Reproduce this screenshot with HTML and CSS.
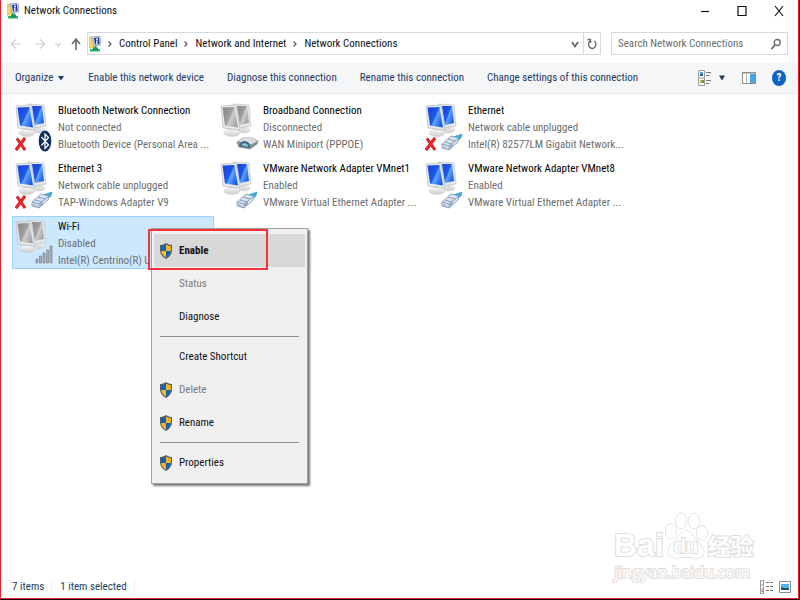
FILE: index.html
```html
<!DOCTYPE html>
<html lang="en">
<head>
<meta charset="utf-8">
<title>Network Connections</title>
<link rel="stylesheet" href="styles.css">
</head>
<body>
<svg class="defs" aria-hidden="true">
  <defs>
    <linearGradient id="blue" x1="0" y1=".2" x2="1" y2=".8">
      <stop offset="0" stop-color="#1a45d8"/><stop offset=".45" stop-color="#1c58ea"/><stop offset=".55" stop-color="#5fa2ff"/><stop offset="1" stop-color="#0f55e6"/>
    </linearGradient>
    <linearGradient id="gray" x1="0" y1=".2" x2="1" y2=".8">
      <stop offset="0" stop-color="#8a8a8a"/><stop offset=".45" stop-color="#a0a0a0"/><stop offset=".55" stop-color="#cdcdcd"/><stop offset="1" stop-color="#a0a0a0"/>
    </linearGradient>
    <linearGradient id="base" x1="0" y1="0" x2="0" y2="1">
      <stop offset="0" stop-color="#f8f8f8"/><stop offset="1" stop-color="#c9cbcd"/>
    </linearGradient>
    <symbol id="frames" viewBox="0 0 40 52">
      <ellipse cx="25" cy="29" rx="6" ry="3" fill="url(#base)" stroke="#d8dadc" stroke-width=".6"/>
      <path d="M22 24h5v5h-5z" fill="#dcdee0"/>
      <path d="M14 3 L30 4 L32 25 L19 27Z" fill="#e4e8ec" stroke="#c2c6ca" stroke-width=".7"/>
      <path d="M10 26 h6 v6 h-6z" fill="#d4d6d8"/>
      <ellipse cx="13" cy="32" rx="8" ry="3.500" fill="url(#base)" stroke="#d0d2d4" stroke-width=".6"/>
      <path d="M2 5 L17 4 L21 29 L4 27Z" fill="#e6eaee" stroke="#b8bcc0" stroke-width=".7"/>
    </symbol>
    <symbol id="pc-blue" viewBox="0 0 40 52">
      <use href="#frames"/>
      <path d="M18 5 L28 5 L30 22 L21 24Z" fill="url(#blue)"/>
      <path d="M3.500 6.500 L15.500 6 L19 26.500 L6 24.500Z" fill="url(#blue)"/>
    </symbol>
    <symbol id="pc-gray" viewBox="0 0 40 52">
      <use href="#frames"/>
      <path d="M18 5 L28 5 L30 22 L21 24Z" fill="url(#gray)"/>
      <path d="M3.500 6.500 L15.500 6 L19 26.500 L6 24.500Z" fill="url(#gray)"/>
    </symbol>
    <symbol id="cross" viewBox="0 0 40 52">
      <path d="M3 37.500 L11 49 M11 37 L2 49" stroke="#b81417" stroke-width="3" fill="none"/>
      <path d="M3 37.500 L11 49 M11 37 L2 49" stroke="#f0262c" stroke-width="2.100" fill="none"/>
    </symbol>
    <symbol id="plug" viewBox="0 0 40 52">
      <path d="M29 36 L38 33 L37 37 L33 40Z" fill="#35b2e6" stroke="#1d86b8" stroke-width=".5"/>
      <path d="M18 43 L27 35 L35 37 L34 41 L25 49 L18 47Z" fill="#d9e5f1" stroke="#8096ae" stroke-width=".8"/>
      <path d="M18 43 L25 45 L35 37 M25 45 V49 M21 41 L28 43 M24 38 L31 40 M20 45 V47 M22 46 V48" fill="none" stroke="#7188a2" stroke-width=".8"/>
      <path d="M26 45 L29 43 V45 L26 48Z" fill="#8aa4c2"/>
    </symbol>
    <symbol id="bluetooth" viewBox="0 0 40 52">
      <ellipse cx="31" cy="40" rx="6.300" ry="10.500" fill="#0b2d5e"/>
      <path d="M27.500 36 L34.500 44 L31 47.500 V33 L34.500 36.500 L27.500 44.500" fill="none" stroke="#fff" stroke-width="1.300"/>
    </symbol>
    <symbol id="modem" viewBox="0 0 40 52">
      <path d="M18 41 L24 37 L33 37 L39 40 L38 43 L31 48 L20 46Z" fill="#8c9096" stroke="#777b80" stroke-width=".7"/>
      <path d="M19 40.500 L24 37 L33 37 L38.500 40 L32 43.500Z" fill="#dcdee1"/>
      <path d="M20 44 Q23 38 29 41 Q32 43 31 47 L21 45.500Z" fill="#3f6f88"/>
      <path d="M23 43 Q26 41 29 44 V45.500 L23 44.500Z" fill="#8fc2da"/>
    </symbol>
    <symbol id="bars" viewBox="0 0 40 52">
      <g fill="#aab3bb" stroke="#7f8992" stroke-width=".8"><path d="M22 42h2v4h-2zM25.500 39h2v7h-2zM29 36h2v10h-2zM32.500 33h2v13h-2zM36 29h2v17h-2z"/></g>
    </symbol>
    <symbol id="shield" viewBox="0 0 12 16">
      <path d="M6 .5 Q8.500 2.500 11.500 2.500 V8 Q11 12.500 6 15.500 Q1 12.500 .5 8 V2.500 Q3.500 2.500 6 .5Z" fill="#fdb913"/>
      <path d="M6 1 Q3.500 3 1 3 V8 H6Z M6 8 H11 Q10.500 12 6 15Z" fill="#0c62c4"/>
      <path d="M6 .7 Q8.500 2.500 11.400 2.500 V8 Q11 12.500 6 15.300 Q1 12.500 .6 8 V2.500 Q3.500 2.500 6 .7Z" fill="none" stroke="#4d5a66" stroke-width="1.100"/>
    </symbol>
    <symbol id="net" viewBox="0 0 12 16">
      <path d="M0 1h5v11H0z" fill="#f2d768" stroke="#c9ac42" stroke-width=".5"/>
      <path d="M3 1 L11 0 L12 9 L5 10Z" fill="#d8dde6" stroke="#7f8794" stroke-width=".6"/>
      <path d="M5 2 L10 1.500 L10.500 8 L6 8.500Z" fill="#1632bd"/>
      <path d="M7 2.500h2v2H7zM7 5h1.500v3H7z" fill="#dfe8ff"/>
      <path d="M5.500 10h2v3h-2z" fill="#28a862"/><path d="M1 13h10v2.500H1z" fill="#25b76a"/><path d="M4 11.500h5v3H4z" fill="#1a9654"/>
    </symbol>
  </defs>
</svg>

<div class="window">
  <header class="titlebar">
    <svg class="net-icon" aria-hidden="true"><use href="#net"/></svg>
    <h1>Network Connections</h1>
    <div class="caption">
      <button aria-label="Minimize"><svg viewBox="0 0 12 12"><path d="M2 6.500h8" stroke="#111" stroke-width="1.200"/></svg></button>
      <button aria-label="Maximize"><svg viewBox="0 0 12 12"><path d="M2 1.500h8v9H2z" fill="none" stroke="#111" stroke-width="1.200"/></svg></button>
      <button aria-label="Close"><svg viewBox="0 0 12 12"><path d="M2 1l8 10M10 1L2 11" stroke="#111" stroke-width="1.200"/></svg></button>
    </div>
  </header>

  <div class="navrow">
    <nav class="arrows" aria-label="History">
      <button aria-label="Back"><svg viewBox="0 0 12 12"><path d="M11 6H2M6 1.500L1.500 6L6 10.500" fill="none" stroke="#cfcfcf" stroke-width="1.200"/></svg></button>
      <button aria-label="Forward"><svg viewBox="0 0 12 12"><path d="M1 6h9M6 1.500L10.500 6L6 10.500" fill="none" stroke="#cfcfcf" stroke-width="1.200"/></svg></button>
      <button class="recent" aria-label="Recent locations"><svg viewBox="0 0 12 12"><path d="M3.500 5L6 8L8.500 5" fill="none" stroke="#cfcfcf" stroke-width="1.200"/></svg></button>
      <button aria-label="Up"><svg viewBox="0 0 12 12"><path d="M6 12V1.500M2 6L6 1L10 6" fill="none" stroke="#6b6b6b" stroke-width="1.600"/></svg></button>
    </nav>
    <div class="address">
      <svg class="net-icon" aria-hidden="true"><use href="#net"/></svg>
      <svg class="chev" viewBox="0 0 4 8"><path d="M.5 1.500L3 4L.5 6.500" fill="none" stroke="#555" stroke-width="1.200"/></svg>
      <a href="#">Control Panel</a>
      <svg class="chev" viewBox="0 0 4 8"><path d="M.5 1.500L3 4L.5 6.500" fill="none" stroke="#555" stroke-width="1.200"/></svg>
      <a href="#">Network and Internet</a>
      <svg class="chev" viewBox="0 0 4 8"><path d="M.5 1.500L3 4L.5 6.500" fill="none" stroke="#555" stroke-width="1.200"/></svg>
      <a href="#">Network Connections</a>
      <button class="drop" aria-label="Previous locations"><svg viewBox="0 0 12 12"><path d="M3 4L6 8.500L9 4" fill="none" stroke="#666" stroke-width="1.700"/></svg></button>
      <button class="refresh" aria-label="Refresh"><svg viewBox="0 0 12 12"><path d="M8.500 3A3.600 4.200 0 1 1 4 3M1.500 1.500H4.500V5" fill="none" stroke="#666" stroke-width="1.400"/></svg></button>
    </div>
    <div class="search">
      <input type="text" aria-label="Search Network Connections" placeholder="Search Network Connections">
      <svg viewBox="0 0 12 12"><circle cx="7.200" cy="4.500" r="3" fill="none" stroke="#666" stroke-width="1.300"/><path d="M5 7L1.500 11" stroke="#666" stroke-width="1.800"/></svg>
    </div>
  </div>

  <div class="toolbar">
    <button class="organize">Organize <svg viewBox="0 0 8 6"><path d="M1 1h6L4 5.500Z" fill="#1e395b"/></svg></button>
    <button>Enable this network device</button>
    <button>Diagnose this connection</button>
    <button>Rename this connection</button>
    <button>Change settings of this connection</button>
    <div class="tools">
      <button aria-label="Change your view"><svg class="view" viewBox="0 0 28 16">
        <path d="M.5.5h6v15h-6zM.5 8h6" fill="#fafafa" stroke="#9a9a9a"/><path d="M2 2h3v2H2z" fill="#4fa4e4"/><path d="M2 4h3v2H2z" fill="#275f8f"/><path d="M2 10h2v3H2z" fill="#e39a3f"/><path d="M4 10h2v3H4z" fill="#46a548"/>
        <path d="M8 2.500h5M8 5.500h3M8 10.500h5M8 13.500h3" stroke="#777"/><path d="M21 5.500h6L24 10.500Z" fill="#1e395b"/></svg></button>
      <button aria-label="Show the preview pane"><svg class="pane" viewBox="0 0 14 14"><path d="M.5 1.500h13v11H.5z" fill="#fff" stroke="#8b8b8b"/><path d="M.5 1.500h13v1H.5z" fill="#8b8b8b"/><path d="M4.500 2v10" stroke="#b5b5b5"/><path d="M8 3h5v9H8z" fill="#45a3ea"/></svg></button>
      <button class="help" aria-label="Help">?</button>
    </div>
  </div>

  <main>
    <ul class="connections">
      <li><svg><use href="#pc-blue"/><use href="#cross"/><use href="#bluetooth"/></svg>
        <div><strong>Bluetooth Network Connection</strong><span>Not connected</span><span>Bluetooth Device (Personal Area ...</span></div></li>
      <li><svg><use href="#pc-gray"/><use href="#modem"/></svg>
        <div><strong>Broadband Connection</strong><span>Disconnected</span><span>WAN Miniport (PPPOE)</span></div></li>
      <li><svg><use href="#pc-blue"/><use href="#cross"/><use href="#plug"/></svg>
        <div><strong>Ethernet</strong><span>Network cable unplugged</span><span>Intel(R) 82577LM Gigabit Network...</span></div></li>
      <li><svg><use href="#pc-blue"/><use href="#cross"/><use href="#plug"/></svg>
        <div><strong>Ethernet 3</strong><span>Network cable unplugged</span><span>TAP-Windows Adapter V9</span></div></li>
      <li><svg><use href="#pc-blue"/><use href="#plug"/></svg>
        <div><strong>VMware Network Adapter VMnet1</strong><span>Enabled</span><span>VMware Virtual Ethernet Adapter ...</span></div></li>
      <li><svg><use href="#pc-blue"/><use href="#plug"/></svg>
        <div><strong>VMware Network Adapter VMnet8</strong><span>Enabled</span><span>VMware Virtual Ethernet Adapter ...</span></div></li>
      <li class="selected"><svg><use href="#pc-gray"/><use href="#bars"/></svg>
        <div><strong>Wi-Fi</strong><span>Disabled</span><span>Intel(R) Centrino(R) U</span></div></li>
    </ul>
  </main>

  <footer>
    <span>7 items</span><span>1 item selected</span>
    <div class="views">
      <button aria-label="Details view"><svg viewBox="0 0 14 14"><path d="M.5.500h3v13h-3zM.5 5h3M.5 9h3" fill="#fff" stroke="#999"/><path d="M1.500 10.500h1.500v1.500H1.500z" fill="#d66"/><path d="M6 2.500h3M10 2.500h3M6 6.500h3M10 6.500h3M6 10.500h3M10 10.500h3" stroke="#777"/></svg></button>
      <button aria-label="Large icons view"><svg viewBox="0 0 14 14"><path d="M1.500 1.500h11v11h-11z" fill="#fff" stroke="#8c8c8c"/><path d="M3 4h8v6H3z" fill="#58b0ea"/><path d="M3 7l3 1h5v2H3z" fill="#1d5a66"/></svg></button>
    </div>
  </footer>

  <div class="menu" role="menu">
    <button class="default" role="menuitem"><svg><use href="#shield"/></svg>Enable</button>
    <button role="menuitem" disabled>Status</button>
    <button role="menuitem">Diagnose</button>
    <hr>
    <button role="menuitem">Create Shortcut</button>
    <button role="menuitem" disabled><svg><use href="#shield"/></svg>Delete</button>
    <button role="menuitem"><svg><use href="#shield"/></svg>Rename</button>
    <hr>
    <button role="menuitem"><svg><use href="#shield"/></svg>Properties</button>
  </div>
  <div class="highlight"></div>

  <div class="watermark">
    <div class="brand"><span class="bai">Bai</span>
      <span class="paw"><svg viewBox="0 0 44 48"><g fill="#fff" stroke="#dcdcdc" stroke-width="1.300"><ellipse cx="7" cy="19" rx="5.500" ry="7"/><ellipse cx="17" cy="9" rx="5.500" ry="7.500"/><ellipse cx="30" cy="9" rx="5.500" ry="7.500"/><ellipse cx="38" cy="21" rx="5.500" ry="7"/><path d="M22 19 C28 19 29 26 35 31 C43 38 40 46 33 46 C28 46 27 45 22 45 C17 45 15 46 11 46 C3 45 2 37 9 31 C15 26 16 19 22 19Z"/></g></svg><span class="du">du</span></span>
      <span class="cn" lang="zh">经验</span></div>
    <div class="site">jingyan.baidu.com</div>
  </div>
</div>
</body>
</html>
```
FILE: styles.css
```css
* { box-sizing: border-box; }

body {
  margin: 0;
  padding: 0 1px 1px 0;
  height: 100vh;
  background: #1a0508;
  color: #111;
  font: 11px/16px "Roboto Condensed", Lato, sans-serif;
}

button, input {
  font: inherit;
  color: inherit;
  border: 0;
  padding: 0;
  background: none;
}

a { color: inherit; text-decoration: none; }
svg { display: block; flex: none; }
.defs { position: absolute; width: 0; height: 0; }

.window {
  position: relative;
  display: flex;
  flex-direction: column;
  height: 100%;
  background: #fff;
  border: 1px solid #e8202c;
  border-top: 0;
}

.net-icon { width: 12px; height: 16px; }

.titlebar {
  display: flex;
  align-items: center;
  height: 22px;
  padding-left: 6px;
  gap: 5px;
}
.titlebar h1 { margin: 0; font-size: 11px; font-weight: 400; }
.caption { display: flex; gap: 25px; margin-left: auto; padding-right: 13px; }
.caption svg { width: 12px; height: 12px; }

.navrow {
  display: flex;
  align-items: center;
  height: 41px;
  padding: 2px 10px 0 9px;
}
.arrows { display: flex; gap: 12px; width: 77px; }
.arrows svg { width: 12px; height: 12px; }
.arrows .recent { margin: 0 -6px; }

.address {
  display: flex;
  align-items: center;
  flex: 1;
  height: 23px;
  padding-left: 1px;
  border: 1px solid #d9d9d9;
}
.chev { width: 4px; height: 8px; margin: 0 7px; }
.address .drop { margin-left: auto; padding: 0 2px; }
.address .refresh {
  height: 21px;
  padding: 0 2px;
  border-left: 1px solid #d9d9d9;
}
.address button svg { width: 12px; height: 12px; }

.search {
  display: flex;
  align-items: center;
  width: 177px;
  height: 23px;
  margin-left: 10px;
  padding: 0 5px 0 6px;
  border: 1px solid #d9d9d9;
}
.search input { flex: 1; min-width: 0; outline: 0; }
.search input::placeholder { color: #6d6d6d; opacity: 1; }
.search svg { width: 12px; height: 12px; }

.toolbar {
  display: flex;
  align-items: center;
  gap: 23px;
  height: 31px;
  padding: 0 12px 0 14px;
  background: #f5f6f8;
  border-bottom: 1px solid #e6e8eb;
  color: #1e395b;
  white-space: nowrap;
}
.organize { display: flex; align-items: center; gap: 4px; }
.organize svg { width: 8px; height: 6px; }
.tools { display: flex; align-items: center; gap: 16px; margin-left: auto; }
.view { width: 28px; height: 16px; }
.pane { width: 14px; height: 14px; }
.help {
  width: 14px;
  height: 16px;
  border-radius: 50%;
  background: #0b63c5;
  color: #fff;
  font-weight: 700;
}

main { flex: 1; padding: 6px 11px; }
.connections {
  display: grid;
  grid-template-columns: repeat(auto-fill, 202px);
  gap: 5px 3px;
  margin: 0;
  padding: 0;
  list-style: none;
}
.connections li {
  display: flex;
  gap: 4px;
  height: 53px;
  border: 1px solid transparent;
  white-space: nowrap;
}
.connections svg { width: 40px; height: 52px; margin-left: 1px; }
.connections div { padding-top: 1px; }
.connections strong, .connections span { display: block; line-height: 17px; }
.connections strong { font-weight: 400; color: #000; }
.connections span { color: #6d6d6d; }
.connections .selected { background: #cce8ff; border-color: #99d1ff; }

footer {
  display: flex;
  align-items: center;
  height: 23px;
  padding: 0 6px 0 11px;
  color: #1e395b;
}
footer > span { margin-right: 8px; padding-right: 7px; border-right: 1px solid #f0f0f0; }
.views { display: flex; gap: 4px; margin-left: auto; }
.views svg { width: 14px; height: 14px; }

.menu {
  position: absolute;
  left: 150px;
  top: 228px;
  width: 157px;
  padding: 5px 2px 4px;
  background: #f0f0f0;
  border: 1px solid #a0a0a0;
  box-shadow: 2px 2px 2px #777;
}
.menu button {
  display: flex;
  align-items: center;
  gap: 7px;
  width: 100%;
  height: 33px;
  padding-left: 25px;
}
.menu button:has(svg) { padding-left: 6px; }
.menu svg { width: 12px; height: 16px; }
.menu button:disabled { color: #7b7b7b; }
.menu .default { background: #d8d8d8; font-weight: 700; }
.menu hr { height: 1px; margin: 3px 6px; border: 0; background: #919191; }

.highlight {
  position: absolute;
  left: 147px;
  top: 229px;
  width: 120px;
  height: 41px;
  border: 2px solid #f53237;
}

.watermark {
  position: absolute;
  right: 40px;
  bottom: 14px;
  width: 144px;
  color: #fff;
  -webkit-text-stroke: 2px #dedede;
  paint-order: stroke fill;
}
.brand { display: flex; align-items: flex-end; height: 48px; }
.bai { font: 700 32px/30px "Liberation Sans", sans-serif; }
.paw { position: relative; width: 44px; }
.paw svg { width: 44px; height: 48px; }
.du {
  position: absolute;
  left: 10px;
  bottom: 4px;
  font: 700 20px/20px "Liberation Sans", sans-serif;
}
.cn { font: 700 23px/30px "Noto Sans CJK SC", sans-serif; }
.site { font: 16px/24px "Open Sans", sans-serif; }
```
